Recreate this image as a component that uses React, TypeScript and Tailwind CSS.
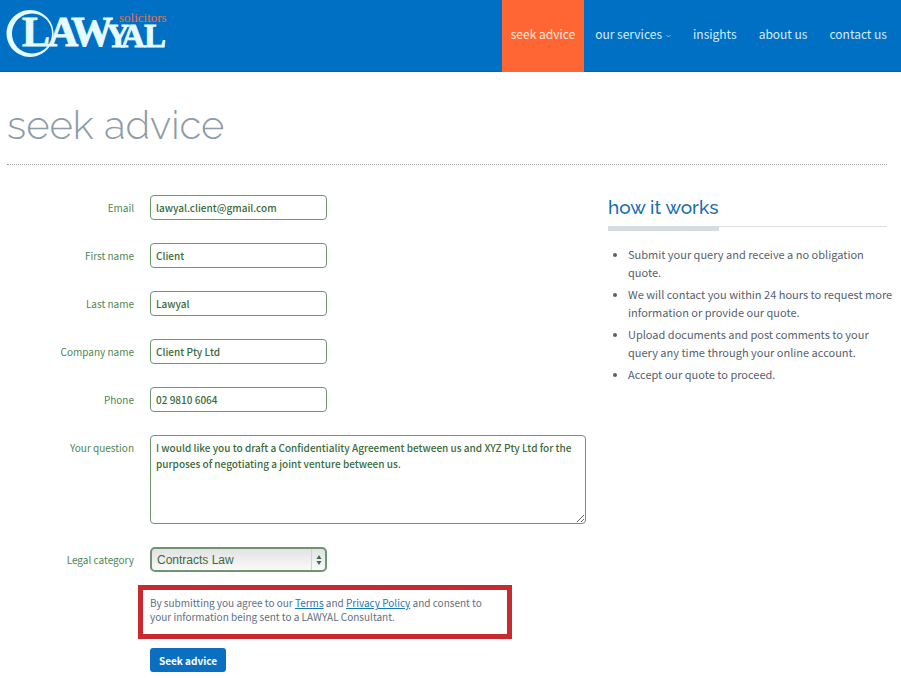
import React from 'react';

interface NavItem {
  label: string;
  active?: boolean;
  hasMenu?: boolean;
}

interface TextField {
  id: string;
  label: string;
  type: string;
  value: string;
}

const navItems: NavItem[] = [
  { label: 'seek advice', active: true },
  { label: 'our services', hasMenu: true },
  { label: 'insights' },
  { label: 'about us' },
  { label: 'contact us' },
];

const textFields: TextField[] = [
  { id: 'email', label: 'Email', type: 'email', value: 'lawyal.client@gmail.com' },
  { id: 'first-name', label: 'First name', type: 'text', value: 'Client' },
  { id: 'last-name', label: 'Last name', type: 'text', value: 'Lawyal' },
  { id: 'company', label: 'Company name', type: 'text', value: 'Client Pty Ltd' },
  { id: 'phone', label: 'Phone', type: 'tel', value: '02 9810 6064' },
];

const steps = [
  'Submit your query and receive a no obligation quote.',
  'We will contact you within 24 hours to request more information or provide our quote.',
  'Upload documents and post comments to your query any time through your online account.',
  'Accept our quote to proceed.',
];

const question =
  'I would like you to draft a Confidentiality Agreement between us and XYZ Pty Ltd for the purposes of negotiating a joint venture between us.';

const Logo: React.FC = () => (
  <svg width="170" height="60" viewBox="0 0 170 60" role="img" aria-label="Lawyal solicitors">
    {/* Crescent ring around the L */}
    <path
      fillRule="evenodd"
      fill="#e6fbff"
      d="M30 10a23.5 23.5 0 1 0 0.01 0zM32 13.5a20 20 0 1 1 -0.01 0z"
    />
    <g
      fill="#e6fbff"
      stroke="#e6fbff"
      strokeWidth="0.8"
      fontFamily="'Liberation Serif', serif"
      fontWeight="700"
    >
      <text x="22" y="46" fontSize="42">L</text>
      <text x="48" y="46" fontSize="42">A</text>
      <text x="71" y="46" fontSize="42">W</text>
      <text x="106" y="47" fontSize="33">Y</text>
      <text x="121" y="47" fontSize="33">A</text>
      <text x="144" y="47" fontSize="33">L</text>
    </g>
    <text x="119" y="22" fontSize="13" fill="#e8704e" fontFamily="'Liberation Serif', serif">
      solicitors
    </text>
  </svg>
);

const Header: React.FC = () => (
  <header className="flex h-[72px] justify-between border-b border-[#0a62ae] bg-[#0070c5] pr-[3px]">
    <a href="#home" className="block">
      <Logo />
    </a>
    <nav className="flex text-xs text-[#d3ecfa]">
      {navItems.map(item => (
        <a
          key={item.label}
          href="#nav"
          className={
            item.active
              ? 'flex h-[72px] items-center bg-[#ff6633] px-[9px] pb-1 text-[#ffe9df]'
              : 'flex h-[72px] items-center px-[11px] pb-1'
          }
        >
          {item.label}
          {item.hasMenu && (
            <svg width="5" height="4" viewBox="0 0 5 4" className="ml-1 mt-1" aria-hidden="true">
              <path d="M0.5 1l2 2 2-2" fill="none" stroke="#7fbbe8" />
            </svg>
          )}
        </a>
      ))}
    </nav>
  </header>
);

const labelClass = 'w-[127px] shrink-0 text-right text-[10px] leading-[25px] text-[#4f8552]';

const AdviceForm: React.FC = () => (
  <form className="min-w-0 flex-1" onSubmit={e => e.preventDefault()}>
    {textFields.map(field => (
      <div key={field.id} className="mb-[23px] flex gap-4">
        <label htmlFor={field.id} className={labelClass}>{field.label}</label>
        <input
          id={field.id}
          type={field.type}
          defaultValue={field.value}
          className="h-[25px] w-[177px] rounded border border-[#6f9470] bg-white px-[5px] text-[10px] font-medium text-[#3a6b3c]"
        />
      </div>
    ))}

    <div className="mb-[23px] flex gap-4">
      <label htmlFor="question" className={labelClass}>Your question</label>
      <textarea
        id="question"
        defaultValue={question}
        className="block h-[89px] min-w-0 flex-1 resize rounded border border-[#6f9470] bg-white px-[5px] py-1 text-[10px] leading-4 font-medium text-[#3a6b3c]"
      />
    </div>

    <div className="flex gap-4">
      <label htmlFor="category" className={labelClass}>Legal category</label>
      <div className="relative">
        <select
          id="category"
          className="block h-[25px] w-[177px] appearance-none rounded-[5px] border-2 border-[#6f9470] bg-linear-to-b from-[#e2e2e4] to-[#fafafa] px-[5px] font-['Liberation_Sans',sans-serif] text-xs leading-4 text-[#3a6b3c]"
        >
          <option>Contracts Law</option>
        </select>
        <span className="pointer-events-none absolute inset-y-0.5 right-0.5 flex w-3.5 items-center justify-center border-l border-[#cfd4cf]">
          <svg width="6" height="10" viewBox="0 0 6 10" fill="#3a6b3c" aria-hidden="true">
            <path d="M3 0l2.5 4h-5zM3 10l2.5-4h-5z" />
          </svg>
        </span>
      </div>
    </div>

    <div className="mt-[13px] ml-[131px] w-[374px] border-[5px] border-[#c92a30] px-[7px] pt-1.5 pb-[10px] text-[10px] leading-[14px] text-[#5f6f80]">
      By submitting you agree to our{' '}
      <a href="#terms" className="text-[#1878b8] underline">Terms</a> and{' '}
      <a href="#privacy" className="text-[#1878b8] underline">Privacy Policy</a> and consent to
      <br />
      your information being sent to a LAWYAL Consultant.
    </div>

    <button
      type="submit"
      className="mt-[9px] ml-[143px] block h-6 w-[76px] rounded-[3px] bg-[#0a6fc0] text-[10px] font-bold text-white"
    >
      Seek advice
    </button>
  </form>
);

const HowItWorks: React.FC = () => (
  <aside className="w-[279px] shrink-0">
    <div className="border-b border-[#d9dde0]">
      <h2 className="-mb-[5px] inline-block border-b-[5px] border-[#d5dce2] pb-[7px] align-top font-['Raleway','Lato',sans-serif] text-[19px] leading-6 font-medium text-[#1a6fae]">
        how it works
      </h2>
    </div>
    <ul className="mt-[18px] -mr-2 list-disc space-y-1 pl-5 text-[11px] leading-[18px] text-[#55616e]">
      {steps.map(step => (
        <li key={step}>{step}</li>
      ))}
    </ul>
  </aside>
);

export default function App() {
  return (
    <div className="min-h-screen bg-white font-['Source_Sans_Pro','Noto_Sans_CJK_JP',sans-serif]">
      <Header />
      <main className="pr-[14px] pl-[7px]">
        <h1 className="border-b border-dotted border-[#9a9a9a] pt-[29px] pb-[15px] font-['Raleway','Lato',sans-serif] text-[40px] leading-[48px] font-light text-[#8f9ba8]">
          seek advice
        </h1>
        <div className="flex gap-[22px] pt-[30px]">
          <AdviceForm />
          <HowItWorks />
        </div>
      </main>
    </div>
  );
}
